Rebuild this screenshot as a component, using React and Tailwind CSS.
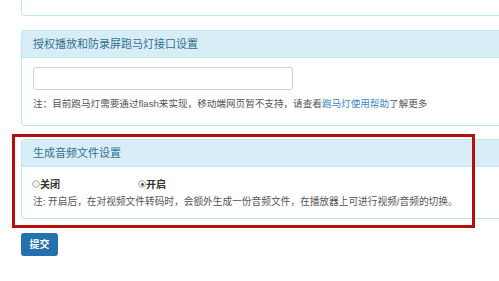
export default function App() {
  const font = { fontFamily: '"Liberation Sans", "Noto Sans CJK SC", sans-serif' };
  return (
    <div
      className="relative w-[499px] h-[281px] overflow-hidden bg-white pl-[21px]"
      style={font}
    >
      {/* panel cut off at the top */}
      <div className="w-[490px] h-[16px] border border-t-0 border-[#bce8f1] rounded-b-[3px]" />

      {/* 授权播放 panel */}
      <div className="mt-[14px] w-[490px] border border-[#bce8f1] rounded-[3px]">
        <div className="h-[27px] flex items-center pl-[11px] bg-[#d9edf7] border-b border-[#bce8f1] text-[11px] text-[#31708f]">
          授权播放和防录屏跑马灯接口设置
        </div>
        <div className="pl-[11px] pt-[9px] pb-[14px]">
          <div className="w-[260px] h-[23px] border border-[#d0d0d0] rounded-[3px] bg-white" />
          <p className="mt-[7px] text-[9.6px] leading-[14px] text-[#555]">
            注：目前跑马灯需要通过flash来实现，移动端网页暂不支持，请查看
            <span className="text-[#3a86c8]">跑马灯使用帮助</span>了解更多
          </p>
        </div>
      </div>

      {/* 生成音频 panel */}
      <div className="mt-[13px] w-[490px] border border-[#bce8f1] rounded-[3px]">
        <div className="h-[27px] flex items-center pl-[11px] bg-[#d9edf7] border-b border-[#bce8f1] text-[11px] text-[#31708f]">
          生成音频文件设置
        </div>
        <div className="pl-[10px] pt-[10px] pb-[9px]">
          <div className="flex items-center h-[14px] text-[10px] font-bold text-[#333]">
            <div className="flex items-center w-[106px]">
              <span className="w-[8px] h-[8px] rounded-full border border-[#b5b5b5] bg-[#eee]" />
              <span>关闭</span>
            </div>
            <div className="flex items-center">
              <span className="w-[8px] h-[8px] rounded-full border border-[#b5b5b5] bg-[#eee] flex items-center justify-center">
                <span className="w-[3px] h-[3px] rounded-full bg-[#555]" />
              </span>
              <span>开启</span>
            </div>
          </div>
          <p className="mt-[4px] pl-[1px] text-[9.7px] leading-[14px] text-[#555]">
            注: 开启后，在对视频文件转码时，会额外生成一份音频文件，在播放器上可进行视频/音频的切换。
          </p>
        </div>
      </div>

      <button className="mt-[14px] w-[37px] h-[23px] rounded-[3px] bg-[#2471ad] text-white text-[10px] font-bold">
        提交
      </button>

      {/* red annotation box */}
      <div className="absolute left-[12px] top-[134px] w-[463px] h-[94px] border-[3px] border-[#b80d0d]" />
    </div>
  );
}
